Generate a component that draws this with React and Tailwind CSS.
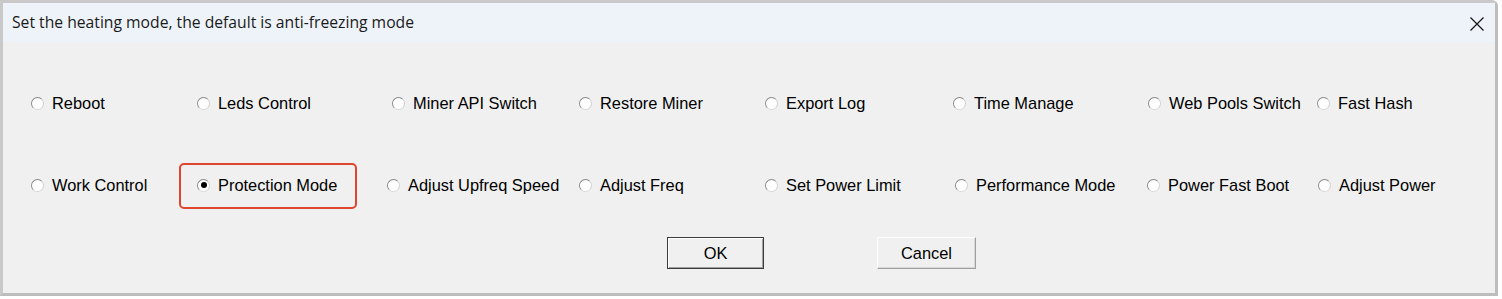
import React from "react";

function Radio({ checked }) {
  return (
    <span className="relative inline-block w-[13px] h-[13px] shrink-0 rounded-full border border-[#8a8a8a] border-b-[#d8d8d8] border-r-[#d0d0d0] bg-white">
      {checked && (
        <span className="absolute left-[2.5px] top-[2.5px] w-[6px] h-[6px] rounded-full bg-black" />
      )}
    </span>
  );
}

function Item({ label, w, checked }) {
  return (
    <div className="flex items-center shrink-0" style={{ width: w }}>
      <Radio checked={checked} />
      <span className="ml-[8px] text-[16.4px] text-black whitespace-nowrap">{label}</span>
    </div>
  );
}

const row1 = [
  { label: "Reboot", w: 166 },
  { label: "Leds Control", w: 195 },
  { label: "Miner API Switch", w: 187 },
  { label: "Restore Miner", w: 186 },
  { label: "Export Log", w: 188 },
  { label: "Time Manage", w: 195 },
  { label: "Web Pools Switch", w: 169 },
  { label: "Fast Hash", w: 120 },
];
const row2 = [
  { label: "Work Control", w: 166 },
  { label: "Protection Mode", w: 190, checked: true },
  { label: "Adjust Upfreq Speed", w: 192 },
  { label: "Adjust Freq", w: 186 },
  { label: "Set Power Limit", w: 190 },
  { label: "Performance Mode", w: 192 },
  { label: "Power Fast Boot", w: 171 },
  { label: "Adjust Power", w: 130 },
];

export default function App() {
  return (
    <div className="w-[1502px] h-[299px] bg-white" style={{ fontFamily: "'Liberation Sans', Arial, sans-serif" }}>
      <div className="w-[1498px] h-[296px] border-[3px] border-[#c9c9c9] border-r-[#bdbdbd] border-b-[#bdbdbd] rounded-tr-[6px] bg-[#f0f0f0] flex flex-col">
        <div className="h-[39px] bg-[#eef3f9] flex items-center justify-between pl-[9px] pr-[10px] shrink-0">
          <span className="text-[15.7px] text-[#1a1a1a]" style={{ fontFamily: "'Open Sans', 'Noto Sans', sans-serif" }}>
            Set the heating mode, the default is anti-freezing mode
          </span>
          <svg width="16" height="16" viewBox="0 0 16 16" className="mt-[2px]">
            <path d="M1.5 1.5 L14.5 14.5 M14.5 1.5 L1.5 14.5" stroke="#1a1a1a" strokeWidth="1.3" fill="none" />
          </svg>
        </div>
        <div className="relative flex-1 flex flex-col">
          <div className="flex items-center h-[22px] mt-[50px] pl-[28px]">
            {row1.map((it) => (
              <Item key={it.label} {...it} />
            ))}
          </div>
          <div className="flex items-center h-[22px] mt-[60px] pl-[28px]">
            {row2.map((it) => (
              <Item key={it.label} {...it} />
            ))}
          </div>
          <div className="absolute left-[176px] top-[121px] w-[178px] h-[46px] border-2 border-[#e0452f] rounded-[5px]" />
          <div className="flex mt-[41px] pl-[664px] gap-[113px]">
            <button className="w-[97px] h-[32px] border border-[#3c3c3c] bg-[#f0f0f0] text-[16.4px] text-black shadow-[inset_1px_1px_0_#ffffff,inset_-1px_-1px_0_#a0a0a0]">
              OK
            </button>
            <button className="w-[99px] h-[32px] border border-t-[#ffffff] border-l-[#ffffff] border-r-[#a0a0a0] border-b-[#a0a0a0] bg-[#f0f0f0] text-[16.4px] text-black shadow-[inset_-1px_-1px_0_#d8d8d8]">
              Cancel
            </button>
          </div>
        </div>
      </div>
    </div>
  );
}
